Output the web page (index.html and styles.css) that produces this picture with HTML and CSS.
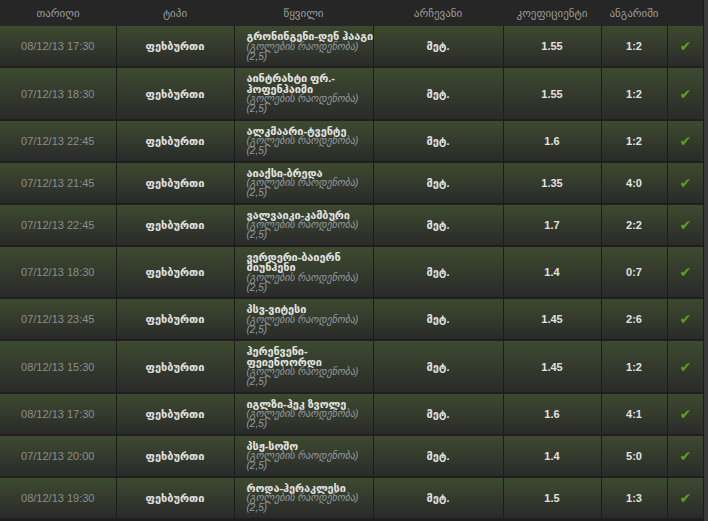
FILE: index.html
```html
<!DOCTYPE html>
<html lang="ka">
<head>
    <meta charset="UTF-8">
    <title>ფსონები</title>
    <link rel="stylesheet" href="styles.css">
</head>
<body>
    <div class="wrap">
        <table class="bets">
            <colgroup>
                <col class="c-date"><col class="c-type"><col class="c-pair"><col class="c-pick"><col class="c-odd"><col class="c-score"><col class="c-ok">
            </colgroup>
            <thead>
                <tr>
                    <th>თარიღი</th>
                    <th>ტიპი</th>
                    <th>წყვილი</th>
                    <th>არჩევანი</th>
                    <th>კოეფიციენტი</th>
                    <th>ანგარიში</th>
                    <th></th>
                </tr>
            </thead>
            <tbody>
                <tr>
                    <td class="date">08/12/13 17:30</td>
                    <td class="bold">ფეხბურთი</td>
                    <td class="pair"><b>გრონინგენი-დენ ჰააგი</b><i>(გოლების რაოდენობა)<br>(2,5)</i></td>
                    <td class="bold">მეტ.</td>
                    <td class="bold">1.55</td>
                    <td class="bold">1:2</td>
                    <td class="ok">&#10004;</td>
                </tr>
                <tr>
                    <td class="date">07/12/13 18:30</td>
                    <td class="bold">ფეხბურთი</td>
                    <td class="pair"><b>აინტრახტი ფრ.-<br>ჰოფენჰაიმი</b><i>(გოლების რაოდენობა)<br>(2,5)</i></td>
                    <td class="bold">მეტ.</td>
                    <td class="bold">1.55</td>
                    <td class="bold">1:2</td>
                    <td class="ok">&#10004;</td>
                </tr>
                <tr>
                    <td class="date">07/12/13 22:45</td>
                    <td class="bold">ფეხბურთი</td>
                    <td class="pair"><b>ალკმაარი-ტვენტე</b><i>(გოლების რაოდენობა)<br>(2,5)</i></td>
                    <td class="bold">მეტ.</td>
                    <td class="bold">1.6</td>
                    <td class="bold">1:2</td>
                    <td class="ok">&#10004;</td>
                </tr>
                <tr>
                    <td class="date">07/12/13 21:45</td>
                    <td class="bold">ფეხბურთი</td>
                    <td class="pair"><b>აიაქსი-ბრედა</b><i>(გოლების რაოდენობა)<br>(2,5)</i></td>
                    <td class="bold">მეტ.</td>
                    <td class="bold">1.35</td>
                    <td class="bold">4:0</td>
                    <td class="ok">&#10004;</td>
                </tr>
                <tr>
                    <td class="date">07/12/13 22:45</td>
                    <td class="bold">ფეხბურთი</td>
                    <td class="pair"><b>ვალვაიკი-კამბური</b><i>(გოლების რაოდენობა)<br>(2,5)</i></td>
                    <td class="bold">მეტ.</td>
                    <td class="bold">1.7</td>
                    <td class="bold">2:2</td>
                    <td class="ok">&#10004;</td>
                </tr>
                <tr>
                    <td class="date">07/12/13 18:30</td>
                    <td class="bold">ფეხბურთი</td>
                    <td class="pair"><b>ვერდერი-ბაიერნ<br>მიუნჰენი</b><i>(გოლების რაოდენობა)<br>(2,5)</i></td>
                    <td class="bold">მეტ.</td>
                    <td class="bold">1.4</td>
                    <td class="bold">0:7</td>
                    <td class="ok">&#10004;</td>
                </tr>
                <tr>
                    <td class="date">07/12/13 23:45</td>
                    <td class="bold">ფეხბურთი</td>
                    <td class="pair"><b>პსვ-ვიტესი</b><i>(გოლების რაოდენობა)<br>(2,5)</i></td>
                    <td class="bold">მეტ.</td>
                    <td class="bold">1.45</td>
                    <td class="bold">2:6</td>
                    <td class="ok">&#10004;</td>
                </tr>
                <tr>
                    <td class="date">08/12/13 15:30</td>
                    <td class="bold">ფეხბურთი</td>
                    <td class="pair"><b>ჰერენვენი-<br>ფეიენოორდი</b><i>(გოლების რაოდენობა)<br>(2,5)</i></td>
                    <td class="bold">მეტ.</td>
                    <td class="bold">1.45</td>
                    <td class="bold">1:2</td>
                    <td class="ok">&#10004;</td>
                </tr>
                <tr>
                    <td class="date">08/12/13 17:30</td>
                    <td class="bold">ფეხბურთი</td>
                    <td class="pair"><b>იგლზი-ჰეკ ზვოლე</b><i>(გოლების რაოდენობა)<br>(2,5)</i></td>
                    <td class="bold">მეტ.</td>
                    <td class="bold">1.6</td>
                    <td class="bold">4:1</td>
                    <td class="ok">&#10004;</td>
                </tr>
                <tr>
                    <td class="date">07/12/13 20:00</td>
                    <td class="bold">ფეხბურთი</td>
                    <td class="pair"><b>პსჟ-სოშო</b><i>(გოლების რაოდენობა)<br>(2,5)</i></td>
                    <td class="bold">მეტ.</td>
                    <td class="bold">1.4</td>
                    <td class="bold">5:0</td>
                    <td class="ok">&#10004;</td>
                </tr>
                <tr>
                    <td class="date">08/12/13 19:30</td>
                    <td class="bold">ფეხბურთი</td>
                    <td class="pair"><b>როდა-ჰერაკლესი</b><i>(გოლების რაოდენობა)<br>(2,5)</i></td>
                    <td class="bold">მეტ.</td>
                    <td class="bold">1.5</td>
                    <td class="bold">1:3</td>
                    <td class="ok">&#10004;</td>
                </tr>
            </tbody>
        </table>
    </div>
</body>
</html>
```

FILE: styles.css
```css
        body, html {
            margin: 0;
            padding: 0;
            background-color: #3a3a3a;
            font-family: "Liberation Sans", "DejaVu Sans", sans-serif;
            font-size: 11px;
            color: #e2e2e2;
        }

        .wrap {
            width: 703px;
            background-color: #262626;
            border-right: 1px solid #1c1c1c;
            border-bottom: 1px solid #1c1c1c;
        }

        .bets {
            width: 703px;
            border-collapse: collapse;
            table-layout: fixed;
        }

        .c-date { width: 116px; }
        .c-type { width: 118px; }
        .c-pair { width: 139px; }
        .c-pick { width: 130px; }
        .c-odd { width: 98px; }
        .c-score { width: 66px; }
        .c-ok { width: 36px; }

        .bets th {
            height: 26px;
            padding: 0;
            font-weight: normal;
            color: #9c9c9c;
            text-align: center;
            background-color: #262626;
        }

        .bets td {
            padding: 5px 0 4.5px;
            line-height: 10px;
            text-align: center;
            vertical-align: middle;
            border-left: 1px solid #1c1c1c;
            border-bottom: 2px solid #1f1f1f;
            background: linear-gradient(#3d4a2f, #2a2a2a);
        }

        .bets td:first-child {
            border-left: none;
        }

        .date {
            color: #8d8d8d;
        }

        .bold {
            font-weight: bold;
        }

        .bets td.pair {
            text-align: left;
            padding-left: 12px;
            white-space: nowrap;
            overflow: hidden;
        }

        .pair b {
            display: block;
            line-height: 10.5px;
            letter-spacing: -0.1px;
        }

        .pair i {
            display: block;
            font-size: 10px;
            color: #959ba3;
        }

        .ok {
            color: #5d9f1f;
            font-size: 14px;
        }
```
